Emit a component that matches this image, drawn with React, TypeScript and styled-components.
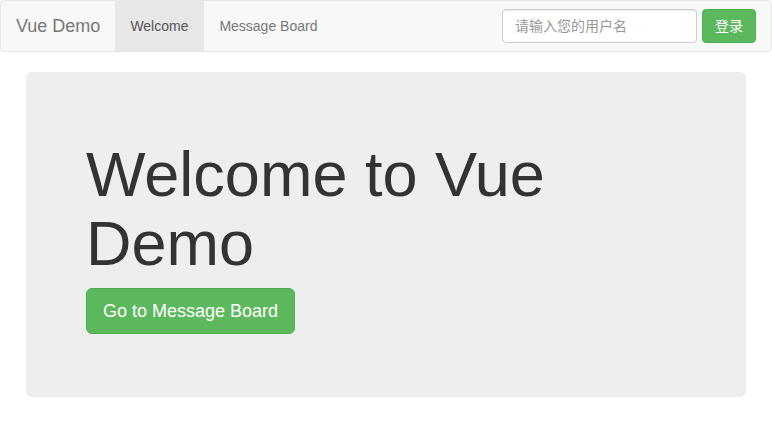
import React, { useState } from "react";
import styled, { createGlobalStyle } from "styled-components";

const GlobalStyle = createGlobalStyle`
  * { box-sizing: border-box; }
  body {
    margin: 0;
    font-family: "Liberation Sans", Arial, "Noto Sans CJK SC", sans-serif;
    font-size: 14px;
    line-height: 1.42857143;
    color: #333;
    background: #fff;
  }
`;

const links = ["Welcome", "Message Board"];

const App = () => {
    const [active, setActive] = useState("Welcome");
    const [user, setUser] = useState("");

    return (
        <>
            <GlobalStyle />
            <Navbar>
                <Brand href="#">Vue Demo</Brand>
                <NavList>
                    {links.map((l) => (
                        <NavItem key={l} $active={active === l} onClick={() => setActive(l)}>
                            {l}
                        </NavItem>
                    ))}
                </NavList>
                <NavForm onSubmit={(e) => e.preventDefault()}>
                    <Input
                        type="text"
                        placeholder="请输入您的用户名"
                        value={user}
                        onChange={(e) => setUser(e.target.value)}
                    />
                    <Button type="submit">登录</Button>
                </NavForm>
            </Navbar>
            <Container>
                <Jumbotron>
                    <Title>Welcome to Vue Demo</Title>
                    <Lead>
                        <Button $large onClick={() => setActive("Message Board")}>
                            Go to Message Board
                        </Button>
                    </Lead>
                </Jumbotron>
            </Container>
        </>
    );
};
export default App;

const Navbar = styled.nav`
  display: flex;
  align-items: center;
  height: 52px;
  margin-bottom: 20px;
  padding: 0 15px 0 0;
  background-color: #f8f8f8;
  border: 1px solid #e7e7e7;
  border-radius: 4px;
`;

const Brand = styled.a`
  padding: 15px;
  font-size: 18px;
  line-height: 20px;
  height: 50px;
  color: #777;
  text-decoration: none;
`;

const NavList = styled.div`
  display: flex;
  flex: 1;
`;

const NavItem = styled.a<{ $active?: boolean }>`
  padding: 15px 15px 15px 15px;
  min-width: 89px;
  line-height: 20px;
  color: ${(p) => (p.$active ? "#555" : "#777")};
  background-color: ${(p) => (p.$active ? "#e7e7e7" : "transparent")};
  cursor: pointer;
  &:hover { color: #333; }
`;

const NavForm = styled.form`
  display: flex;
  align-items: center;
  gap: 5px;
`;

const Input = styled.input`
  width: 195px;
  height: 34px;
  padding: 6px 12px;
  font-family: inherit;
  font-size: 14px;
  color: #555;
  background: #fff;
  border: 1px solid #ccc;
  border-radius: 4px;
  box-shadow: inset 0 1px 1px rgba(0, 0, 0, 0.075);
  outline: none;
  &::placeholder { color: #999; }
`;

const Button = styled.button<{ $large?: boolean }>`
  height: ${(p) => (p.$large ? "46px" : "34px")};
  padding: ${(p) => (p.$large ? "10px 16px" : "6px 12px")};
  font-family: inherit;
  font-size: ${(p) => (p.$large ? "18px" : "14px")};
  line-height: ${(p) => (p.$large ? "1.3333333" : "1.42857143")};
  color: #fff;
  background-color: #5cb85c;
  border: 1px solid #4cae4c;
  border-radius: ${(p) => (p.$large ? "6px" : "4px")};
  cursor: pointer;
  &:hover { background-color: #449d44; }
`;

const Container = styled.div`
  width: 750px;
  margin: 0 auto;
  padding: 0 15px;
`;

const Jumbotron = styled.div`
  padding: 48px 60px;
  background-color: #eee;
  border-radius: 6px;
`;

const Title = styled.h1`
  margin: 20px 0 9px;
  font-size: 63px;
  font-weight: 500;
  line-height: 1.1;
  color: #333;
`;

const Lead = styled.p`
  margin: 0 0 15px;
  font-size: 21px;
  line-height: 0;
  height: 46px;
`;
